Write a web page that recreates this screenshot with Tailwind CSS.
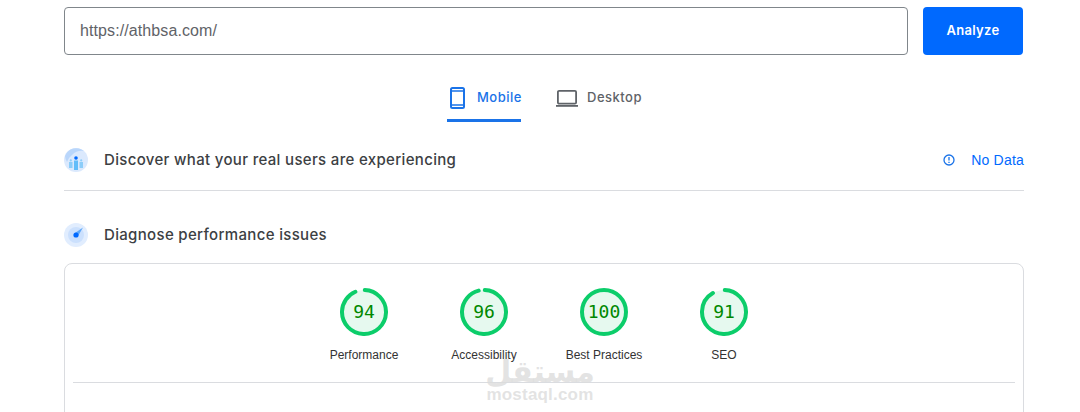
<!DOCTYPE html>
<html>
<head>
<meta charset="utf-8">
<script src="https://cdn.jsdelivr.net/npm/@tailwindcss/browser@4"></script>
</head>
<body class="bg-white">
<div class="relative h-[412px] w-[1080px] overflow-hidden font-['Liberation_Sans',sans-serif]">
  <div class="ml-16 w-[960px] pt-[7px]">
    <div class="flex gap-[15px]">
      <div class="flex h-12 w-[844px] items-center rounded border border-[#80868b] px-[15px] text-base tracking-[0.1px] text-[#5f6368]">https://athbsa.com/</div>
      <div class="flex h-12 w-[100px] items-center justify-center rounded bg-[#0069fe] font-['Inter',sans-serif] text-[13px] font-semibold tracking-[0.3px] text-white">Analyze</div>
    </div>
    <div class="mt-[20px] flex w-[960px] pl-[383px] font-['Inter',sans-serif] text-[13px] font-medium tracking-[0.5px]">
      <div class="flex h-[47px] w-[74px] shrink-0 items-start gap-[11px] border-b-[3px] border-[#1a73e8] pt-[11px] pl-[2px] whitespace-nowrap text-[#1a73e8]">
        <svg class="h-6 w-[17px] shrink-0" viewBox="0 0 17 24"><rect x="2" y="2" width="13" height="20" rx="1.5" fill="none" stroke="#1a73e8" stroke-width="2"/><path d="M2 5h13M2 19h13" stroke="#1a73e8" stroke-width="1.6"/></svg>
        <span class="leading-[22px]">Mobile</span>
      </div>
      <div class="ml-[34px] flex items-start gap-2 pt-[11px] text-[#5f6368]">
        <svg class="h-6 w-6 shrink-0" viewBox="0 0 24 24"><rect x="2.9" y="4.9" width="18.2" height="12.7" rx="1.2" fill="none" stroke="#5f6368" stroke-width="1.8"/><path d="M1 19.9h22" stroke="#5f6368" stroke-width="1.8"/></svg>
        <span class="leading-[22px]">Desktop</span>
      </div>
    </div>
    <div class="flex h-[69px] items-center justify-between border-b border-[#dadce0] pt-[8px]">
      <div class="flex items-center gap-4">
        <svg class="h-6 w-6" viewBox="0 0 24 24"><circle cx="12" cy="12" r="12" fill="#dbe9fd"/><path d="M1 8A12 12 0 0 1 20 3 14 14 0 0 0 8 7 14 14 0 0 0 3 14 12 12 0 0 1 1 8z" fill="#b9d6fb"/><rect x="10" y="12.5" width="4" height="9.5" fill="#62bdf9"/><rect x="5" y="14" width="3.5" height="6" fill="#8ccdf9"/><rect x="15.5" y="14" width="3.5" height="6" fill="#8ccdf9"/><circle cx="12" cy="10" r="1.8" fill="#0069fe"/><circle cx="6.8" cy="12.4" r="1.1" fill="#8ccdf9"/><circle cx="17.2" cy="12.4" r="1.1" fill="#8ccdf9"/></svg>
        <span class="font-['Inter',sans-serif] text-[15px] font-medium tracking-[0.33px] text-[#3c4043]">Discover what your real users are experiencing</span>
      </div>
      <div class="flex items-center gap-4 text-sm tracking-[0.2px] text-[#0069fe]">
        <svg class="h-[12px] w-[12px]" viewBox="0 0 12 12"><circle cx="6" cy="6" r="5" fill="none" stroke="#1a73e8" stroke-width="1.3"/><path d="M6 3v3.4M6 7.8v1.2" stroke="#1a73e8" stroke-width="1.3"/></svg>
        <span>No Data</span>
      </div>
    </div>
    <div class="flex h-[72px] items-center gap-4 pt-[20px] pb-[4px]">
      <svg class="h-6 w-6" viewBox="0 0 24 24"><circle cx="12" cy="12" r="12" fill="#e1edfe"/><circle cx="12" cy="12" r="8" fill="#cbe0fd"/><path d="M11 10L19 4.5 14 13z" fill="#5fa8f9"/><circle cx="12" cy="12" r="2.6" fill="#0069fe"/></svg>
      <span class="font-['Inter',sans-serif] text-[15px] font-medium tracking-[0.33px] text-[#3c4043]">Diagnose performance issues</span>
    </div>
    <div class="h-[200px] rounded-lg border border-[#dadce0] px-2 pt-6">
      <div class="mx-auto flex w-[480px]">
        <div class="flex w-[120px] flex-col items-center">
          <svg class="h-12 w-12" viewBox="0 0 48 48"><circle cx="24" cy="24" r="22" fill="#e6f9ef"/><circle cx="24" cy="24" r="22" fill="none" stroke="#0ccd6a" stroke-width="4" stroke-linecap="round" pathLength="100" stroke-dasharray="93 7" transform="rotate(-88 24 24)"/><text x="24" y="30" text-anchor="middle" font-family="DejaVu Sans Mono, monospace" font-size="18" fill="#008800">94</text></svg>
          <span class="mt-[11px] text-xs leading-[16px] text-[#333333]">Performance</span>
        </div>
        <div class="flex w-[120px] flex-col items-center">
          <svg class="h-12 w-12" viewBox="0 0 48 48"><circle cx="24" cy="24" r="22" fill="#e6f9ef"/><circle cx="24" cy="24" r="22" fill="none" stroke="#0ccd6a" stroke-width="4" stroke-linecap="round" pathLength="100" stroke-dasharray="95.5 4.5" transform="rotate(-88 24 24)"/><text x="24" y="30" text-anchor="middle" font-family="DejaVu Sans Mono, monospace" font-size="18" fill="#008800">96</text></svg>
          <span class="mt-[11px] text-xs leading-[16px] text-[#333333]">Accessibility</span>
        </div>
        <div class="flex w-[120px] flex-col items-center">
          <svg class="h-12 w-12" viewBox="0 0 48 48"><circle cx="24" cy="24" r="22" fill="#e6f9ef" stroke="#0ccd6a" stroke-width="4"/><text x="24" y="30" text-anchor="middle" font-family="DejaVu Sans Mono, monospace" font-size="18" fill="#008800">100</text></svg>
          <span class="mt-[11px] text-xs leading-[16px] text-[#333333]">Best Practices</span>
        </div>
        <div class="flex w-[120px] flex-col items-center">
          <svg class="h-12 w-12" viewBox="0 0 48 48"><circle cx="24" cy="24" r="22" fill="#e6f9ef"/><circle cx="24" cy="24" r="22" fill="none" stroke="#0ccd6a" stroke-width="4" stroke-linecap="round" pathLength="100" stroke-dasharray="91 9" transform="rotate(-88 24 24)"/><text x="24" y="30" text-anchor="middle" font-family="DejaVu Sans Mono, monospace" font-size="18" fill="#008800">91</text></svg>
          <span class="mt-[11px] text-xs leading-[16px] text-[#333333]">SEO</span>
        </div>
      </div>
      <div class="mt-[19px] border-t border-[#dadce0]"></div>
    </div>
  </div>
  <div class="absolute left-[480px] top-[350px] flex w-[120px] flex-col items-center text-[#dcdcdc]/80">
    <span class="font-['DejaVu_Sans',sans-serif] text-[30px] font-bold leading-[44px]" dir="rtl">مستقل</span>
    <span class="-mt-[10px] font-['Liberation_Sans',sans-serif] text-[17px] font-bold leading-[22px] tracking-[0.2px]">mostaql.com</span>
  </div>
</div>
</body>
</html>
